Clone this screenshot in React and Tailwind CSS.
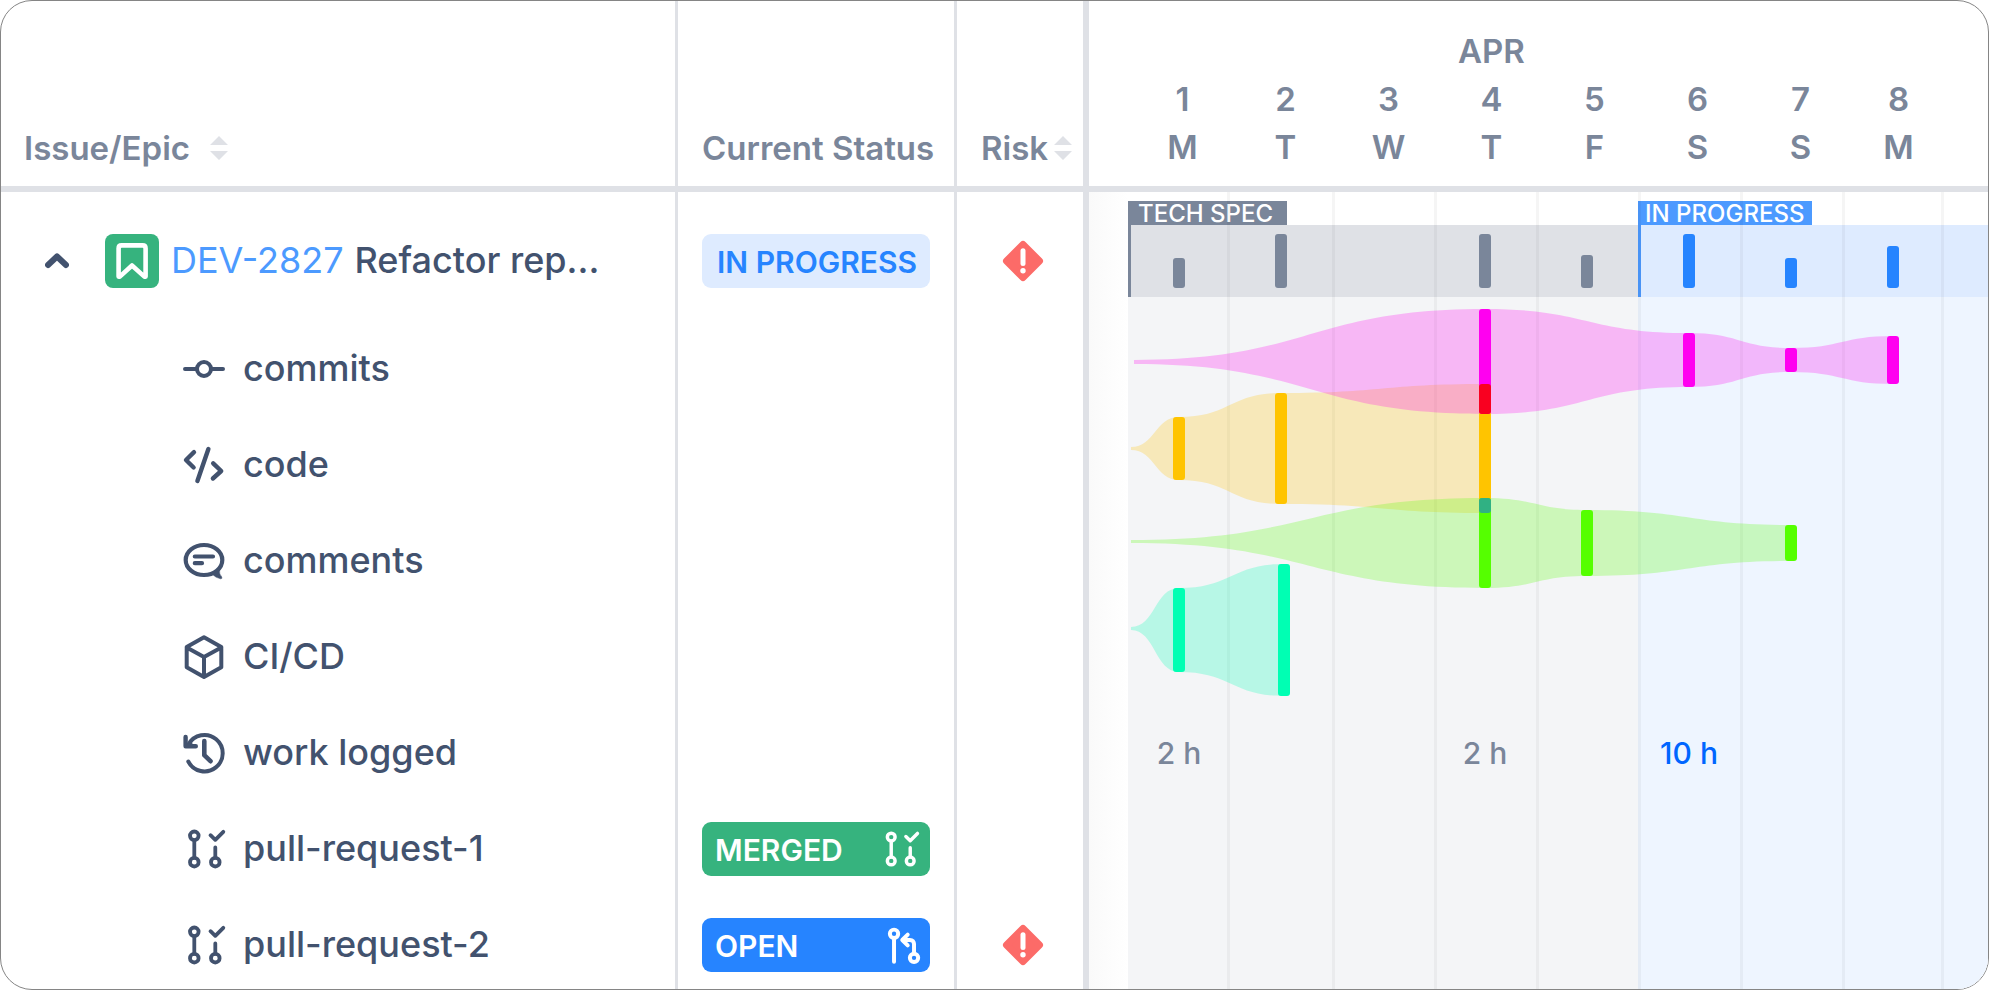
import { useState } from 'react'
import clsx from 'clsx'

const DAYS = [
  { date: 1, letter: 'M' },
  { date: 2, letter: 'T' },
  { date: 3, letter: 'W' },
  { date: 4, letter: 'T' },
  { date: 5, letter: 'F' },
  { date: 6, letter: 'S' },
  { date: 7, letter: 'S' },
  { date: 8, letter: 'M' },
]

const PHASES = [
  {
    name: 'TECH SPEC',
    width: 'w-[510px] shrink-0',
    label: 'w-[159px] bg-[#7a869a] pl-[10px]',
    strip: 'border-[#7a869a] bg-[#dfe1e6]',
    bar: 'bg-[#7a869a]',
    body: 'bg-[#f4f5f7] text-[#7a869a]',
    days: [{ bar: 30, hours: '2 h' }, { bar: 54 }, {}, { bar: 54, hours: '2 h' }, { bar: 33 }],
  },
  {
    name: 'IN PROGRESS',
    width: 'min-w-0 flex-1',
    label: 'w-[174px] bg-[#4c9aff] pl-[7px]',
    strip: 'border-[#4c9aff] bg-[#deebff]',
    bar: 'bg-[#2684ff]',
    body: 'bg-[#eef5ff] text-[#0065ff]',
    days: [{ bar: 54, hours: '10 h' }, { bar: 30 }, { bar: 42 }],
  },
]

const GRID_LINES = [99, 204, 306, 408, 510, 612, 714, 813]

// x is the centre of the bar, top/bottom its extent
const STREAMS = [
  {
    id: 'code',
    color: '#ffc400',
    start: { x: 3, top: 255, bottom: 258 },
    bars: [
      { x: 51, top: 225, bottom: 288 },
      { x: 153, top: 201, bottom: 312 },
      { x: 357, top: 192, bottom: 321 },
    ],
  },
  {
    id: 'commits',
    color: '#ff00f0',
    start: { x: 6, top: 168, bottom: 172 },
    bars: [
      { x: 357, top: 117, bottom: 222 },
      { x: 561, top: 141, bottom: 195 },
      { x: 663, top: 156, bottom: 180 },
      { x: 765, top: 144, bottom: 192 },
    ],
  },
  {
    id: 'comments',
    color: '#55ff00',
    start: { x: 3, top: 348, bottom: 351 },
    bars: [
      { x: 357, top: 306, bottom: 396 },
      { x: 459, top: 318, bottom: 384 },
      { x: 663, top: 333, bottom: 369 },
    ],
  },
  {
    id: 'cicd',
    color: '#00ffb3',
    start: { x: 3, top: 435, bottom: 438 },
    bars: [
      { x: 51, top: 396, bottom: 480 },
      { x: 156, top: 372, bottom: 504 },
    ],
  },
]

const OVERLAPS = [
  { x: 357, top: 192, bottom: 222, color: '#f90020' },
  { x: 357, top: 306, bottom: 321, color: '#30b183' },
]

const ROWS = [
  { name: 'commits', icon: CommitIcon },
  { name: 'code', icon: CodeIcon },
  { name: 'comments', icon: CommentIcon },
  { name: 'CI/CD', icon: CubeIcon },
  { name: 'work logged', icon: HistoryIcon },
  { name: 'pull-request-1', icon: MergedIcon, status: 'MERGED' },
  { name: 'pull-request-2', icon: MergedIcon, status: 'OPEN', risk: true },
]

function streamPath({ start, bars }) {
  const points = [start, ...bars]
  const curve = (from, to, side) => {
    const mid = (from.x + to.x) / 2
    return `C${mid} ${from[side]} ${mid} ${to[side]} ${to.x} ${to[side]}`
  }
  let d = `M${start.x} ${start.top}`
  for (let i = 1; i < points.length; i++) d += curve(points[i - 1], points[i], 'top')
  d += `V${points[points.length - 1].bottom}`
  for (let i = points.length - 1; i > 0; i--) d += curve(points[i], points[i - 1], 'bottom')
  return d + 'Z'
}

export default function App() {
  const [open, setOpen] = useState(true)

  return (
    <div className="h-screen overflow-hidden rounded-[32px] border border-[#858585] bg-white font-[Inter,sans-serif]">
      <table className="w-full table-fixed border-separate border-spacing-0">
        <colgroup>
          <col className="w-[677px]" />
          <col className="w-[279px]" />
          <col className="w-[132px]" />
          <col />
        </colgroup>
        <thead className="text-left text-[33px] leading-[48px] text-[#7a869a]">
          <tr className="h-[191px]">
            <th className="border-r-3 border-b-6 border-[#dfe1e6] pb-3.5 pl-[23px] align-bottom font-semibold">
              <div className="flex items-center gap-5">
                Issue/Epic
                <SortButton label="Sort by issue" />
              </div>
            </th>
            <th className="border-r-3 border-b-6 border-[#dfe1e6] pb-3.5 pl-6 align-bottom font-semibold whitespace-nowrap">Current Status</th>
            <th className="border-r-6 border-b-6 border-[#dfe1e6] pb-3.5 pl-6 align-bottom font-semibold">
              <div className="flex items-center gap-1.5">
                Risk
                <SortButton label="Sort by risk" />
              </div>
            </th>
            <th className="overflow-hidden border-b-6 border-[#dfe1e6] pb-[15px] pl-[42px] align-bottom font-semibold">
              <div className="grid w-max grid-cols-[repeat(7,103px)_93px] text-center">
                <div className="col-start-4">APR</div>
                <div className="col-span-8 grid grid-cols-subgrid">
                  {DAYS.map((day) => <div key={day.date}>{day.date}</div>)}
                </div>
                <div className="col-span-8 grid grid-cols-subgrid">
                  {DAYS.map((day) => <div key={day.date}>{day.letter}</div>)}
                </div>
              </div>
            </th>
          </tr>
        </thead>
        <tbody className="text-4xl text-[#42526e]">
          <tr className="h-[129px]">
            <td className="border-r-3 border-[#dfe1e6] pt-2 pb-0">
              <div className="flex items-center whitespace-nowrap">
                <button
                  type="button"
                  aria-label="Toggle details"
                  aria-expanded={open}
                  onClick={() => setOpen(!open)}
                  className="ml-11 flex h-12 w-6 items-center justify-center"
                >
                  <svg className={clsx('h-4 w-6', !open && 'rotate-180')} viewBox="0 0 24 16" fill="none" stroke="currentColor" strokeWidth="6" strokeLinecap="round" strokeLinejoin="round">
                    <path d="M3 12 12 3.500 21 12" />
                  </svg>
                </button>
                <span className="mr-3 ml-9 flex size-[54px] rounded-lg bg-[#36b37e] text-white">
                  <svg className="size-full" viewBox="0 0 54 54" fill="none" stroke="currentColor" strokeWidth="4.600" strokeLinejoin="round">
                    <path d="M13.600 42.600V14.400q0-3 3-3h21q3 0 3 3v28.200h-1.200L27 31.500 14.800 42.600Z" />
                  </svg>
                </span>
                <a href="#dev-2827" className="pb-0.5 text-[#4c9aff]">DEV-2827</a>
                <span className="ml-[11px] pb-0.5 font-medium">Refactor rep...</span>
              </div>
            </td>
            <td className="border-r-3 border-[#dfe1e6] pt-2 pb-0 pl-6">
              <StatusChip status="IN PROGRESS" />
            </td>
            <td className="border-r-6 border-[#dfe1e6] pt-2 pb-0 pl-[45px]">
              <RiskIcon />
            </td>
            <td rowSpan={ROWS.length + 1} className="overflow-hidden p-0 align-top">
              <Timeline />
            </td>
          </tr>
          {ROWS.map(({ name, icon: Icon, status, risk }) => (
            <tr key={name} className="h-24">
              <td className="border-r-3 border-[#dfe1e6] p-0">
                <div className={clsx('ml-[182px] flex items-center gap-[18px]', !open && 'invisible')}>
                  <Icon className="size-[42px] overflow-visible" />
                  <span className="pb-0.5 font-medium">{name}</span>
                </div>
              </td>
              <td className="border-r-3 border-[#dfe1e6] py-0 pl-6">{status && <StatusChip status={status} />}</td>
              <td className="border-r-6 border-[#dfe1e6] py-0 pl-[45px]">{risk && <RiskIcon />}</td>
            </tr>
          ))}
        </tbody>
      </table>
    </div>
  )
}

function Timeline() {
  return (
    <div className="flex h-[801px] bg-white">
      <div className="w-[39px] shrink-0 bg-linear-to-r from-[#fafafa] to-white" />
      <div className="relative flex min-w-0 flex-1">
        {PHASES.map((phase) => (
          <div key={phase.name} className={clsx('flex flex-col overflow-hidden pt-[9px]', phase.width)}>
            <div className={clsx('h-6 text-2xl leading-[26px] font-medium whitespace-nowrap text-white', phase.label)}>{phase.name}</div>
            <div className={clsx('h-[72px] border-l-3', phase.strip)}>
              <div className="-ml-[3px] flex h-full items-end pb-[9px]">
                {phase.days.map((day, i) => (
                  <div key={i} className="flex w-[102px] shrink-0 justify-center">
                    {day.bar && <div className={clsx('w-3 rounded-[3px]', phase.bar)} style={{ height: day.bar }} />}
                  </div>
                ))}
              </div>
            </div>
            <div className={clsx('flex flex-1 pt-[408px] text-[30px] leading-[96px] font-medium', phase.body)}>
              {phase.days.map((day, i) => (
                <div key={i} className="w-[102px] shrink-0 text-center">{day.hours}</div>
              ))}
            </div>
          </div>
        ))}
        <svg className="pointer-events-none absolute inset-0 size-full">
          {GRID_LINES.map((x) => (
            <rect key={x} x={x} y="0" width="3" height="100%" fill="#000" opacity="0.040" />
          ))}
          {STREAMS.map((stream) => (
            <path key={stream.id} d={streamPath(stream)} fill={stream.color} opacity="0.250" />
          ))}
          {STREAMS.map((stream) => stream.bars.map((bar) => <Bar key={`${stream.id}-${bar.x}`} {...bar} color={stream.color} />))}
          {OVERLAPS.map((bar) => <Bar key={bar.top} {...bar} />)}
        </svg>
      </div>
    </div>
  )
}

function Bar({ x, top, bottom, color }) {
  return <rect x={x - 6} y={top} width="12" height={bottom - top} rx="3" fill={color} />
}

function StatusChip({ status }) {
  const styles = {
    'IN PROGRESS': 'justify-center bg-[#deebff] text-[#2684ff]',
    MERGED: 'justify-between bg-[#36b37e] text-white',
    OPEN: 'justify-between bg-[#2684ff] text-white',
  }

  return (
    <div className={clsx('flex h-[54px] w-[228px] items-center rounded-[9px] pr-[11px] pl-[13px] text-[30px] font-semibold whitespace-nowrap', styles[status])}>
      <span className="pt-1">{status}</span>
      {status === 'MERGED' && <MergedIcon className="size-[38px] overflow-visible" />}
      {status === 'OPEN' && <OpenIcon className="size-[38px] overflow-visible" />}
    </div>
  )
}

function SortButton({ label }) {
  return (
    <button type="button" aria-label={label} className="text-[#dfe1e6]">
      <svg className="h-6 w-[18px]" viewBox="0 0 18 24" fill="currentColor">
        <path d="M9 0l9 9H0zM9 24l9-9H0z" />
      </svg>
    </button>
  )
}

function RiskIcon() {
  return (
    <svg className="size-[42px]" viewBox="0 0 42 42" role="img" aria-label="At risk">
      <path d="M21 4.500 37.500 21 21 37.500 4.500 21Z" fill="#fc6b68" stroke="#fc6b68" strokeWidth="7" strokeLinejoin="round" />
      <path d="M21 10.800V23.500" stroke="#fff" strokeWidth="5" strokeLinecap="round" />
      <circle cx="21" cy="30.700" r="2.700" fill="#fff" />
    </svg>
  )
}

function Icon({ className, strokeWidth = 4, children }) {
  return (
    <svg className={className} viewBox="0 0 42 42" fill="none" stroke="currentColor" strokeWidth={strokeWidth} strokeLinecap="round" strokeLinejoin="round" aria-hidden="true">
      {children}
    </svg>
  )
}

function CommitIcon({ className }) {
  return (
    <Icon className={className}>
      <circle cx="21" cy="21" r="7" />
      <path d="M2 21h11M29 21h11" />
    </Icon>
  )
}

function CodeIcon({ className }) {
  return (
    <Icon className={className} strokeWidth={4.4}>
      <path d="M11 8.200 3 16l7.600 7.500M25.400 5 14.400 37M30.200 19.300l8 7.700-8.300 7.500" />
    </Icon>
  )
}

function CommentIcon({ className }) {
  return (
    <Icon className={className}>
      <ellipse cx="21" cy="20" rx="18.300" ry="15" strokeWidth="4.200" />
      <path d="M11.800 16.500H30M11.800 23.200h7.200" strokeWidth="4.200" />
      <path d="M29.500 34.500 36.500 29.500Q36 34.500 38.800 37 39.500 39 37.500 38.800 33 38 29.500 34.500Z" fill="currentColor" strokeWidth="0.500" />
    </Icon>
  )
}

function CubeIcon({ className }) {
  return (
    <Icon className={className}>
      <path d="M21 1.200 38.300 11v20.200L21 40.900 3.700 31.200V11ZM3.700 11.500 21 21l17.300-9.500M21 21v19.500" />
    </Icon>
  )
}

function HistoryIcon({ className }) {
  return (
    <Icon className={className}>
      <path d="M5.300 29.500A18.200 18.200 0 1 0 5.500 12.500" />
      <path d="M2.600 5v9.300h10.200" strokeWidth="4.400" />
      <path d="M3 13.500 8 8.500 9.500 13.500Z" fill="currentColor" strokeWidth="1" />
      <path d="M21.300 9v14.200l6.200 6" strokeWidth="4.600" />
    </Icon>
  )
}

function MergedIcon({ className }) {
  return (
    <Icon className={className} strokeWidth={3.8}>
      <circle cx="11.300" cy="7.800" r="4.300" />
      <circle cx="11.300" cy="34.200" r="4.300" />
      <circle cx="32.300" cy="34.200" r="4.300" />
      <path d="M11.300 12.500v17M32.300 19.500v10M27.500 7.200l4.800 4.600 8-8" />
    </Icon>
  )
}

function OpenIcon({ className }) {
  return (
    <Icon className={className} strokeWidth={4.4}>
      <circle cx="14.400" cy="8.600" r="4.600" />
      <circle cx="36.500" cy="35.200" r="4.600" />
      <path d="M14.400 13.500v26M36.500 30V20q0-4.500-4.500-4.500h-8M29.500 9.500l-6 6 6 6" />
    </Icon>
  )
}
